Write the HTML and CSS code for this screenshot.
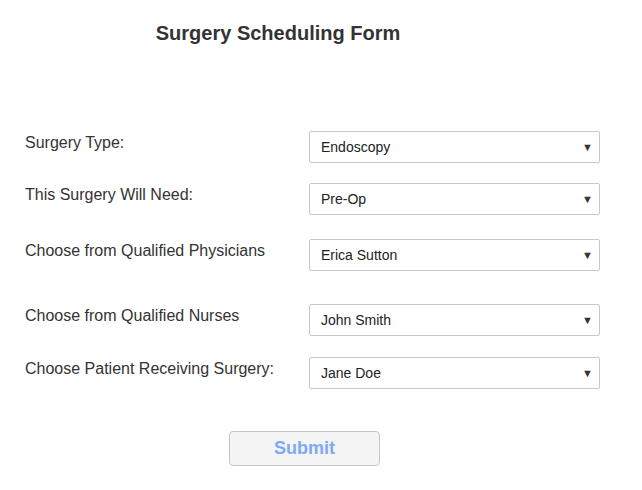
FILE: index.html
```html
<!DOCTYPE html>
<html>
<head>
<meta charset="utf-8">
<link rel="stylesheet" href="styles.css">
</head>
<body>
<div class="page">
  <h1 class="title">Surgery Scheduling Form</h1>
  <form class="form">
    <div class="row r1">
      <label class="label">Surgery Type:</label>
      <div class="select"><span class="value">Endoscopy</span><span class="arrow">▼</span></div>
    </div>
    <div class="row r2">
      <label class="label">This Surgery Will Need:</label>
      <div class="select"><span class="value">Pre-Op</span><span class="arrow">▼</span></div>
    </div>
    <div class="row r3">
      <label class="label">Choose from Qualified Physicians</label>
      <div class="select"><span class="value">Erica Sutton</span><span class="arrow">▼</span></div>
    </div>
    <div class="row r4">
      <label class="label">Choose from Qualified Nurses</label>
      <div class="select"><span class="value">John Smith</span><span class="arrow">▼</span></div>
    </div>
    <div class="row r5">
      <label class="label">Choose Patient Receiving Surgery:</label>
      <div class="select"><span class="value">Jane Doe</span><span class="arrow">▼</span></div>
    </div>
    <div class="actions">
      <button type="button" class="submit">Submit</button>
    </div>
  </form>
</div>
</body>
</html>
```

FILE: styles.css
```css
html, body {
  margin: 0;
  padding: 0;
  background: #ffffff;
}
body {
  font-family: "Liberation Sans", Arial, sans-serif;
  color: #333333;
}
.page {
  width: 642px;
}
.title {
  width: 556px;
  margin: 0;
  padding-top: 21px;
  text-align: center;
  font-size: 20px;
  font-weight: bold;
  line-height: 24px;
  color: #333333;
}
.form {
  display: flex;
  flex-direction: column;
  padding-top: 86px;
}
.row {
  display: flex;
  align-items: center;
  height: 32px;
}
.r2 { margin-top: 20px; }
.r3 { margin-top: 24px; }
.r4 { margin-top: 33px; }
.r5 { margin-top: 21px; }
.label {
  width: 284px;
  padding-left: 25px;
  font-size: 16px;
  line-height: 18px;
  margin-top: -9px;
  color: #333333;
}
.select {
  box-sizing: border-box;
  width: 291px;
  height: 32px;
  border: 1px solid #c8c8c8;
  border-radius: 2px;
  background: #ffffff;
  display: flex;
  align-items: center;
  justify-content: space-between;
  padding: 0 6px 0 11px;
  font-size: 14px;
  color: #222222;
}
.arrow {
  font-size: 11px;
  color: #333333;
}
.actions {
  display: flex;
  padding-left: 229px;
  padding-top: 42px;
}
.submit {
  box-sizing: border-box;
  width: 151px;
  height: 35px;
  border: 1px solid #c6c6c6;
  border-radius: 4px;
  background: #f4f4f4;
  font-family: "Liberation Sans", Arial, sans-serif;
  font-size: 18px;
  font-weight: bold;
  color: #7fa9f7;
  padding: 0;
}
```
